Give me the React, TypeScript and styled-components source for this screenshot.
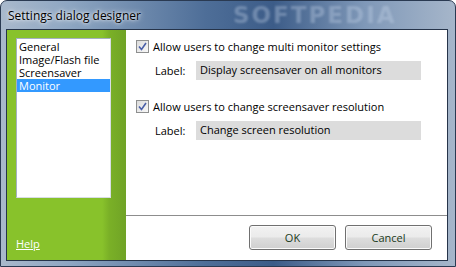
import React from "react";
import styled, { createGlobalStyle } from "styled-components";

const Global = createGlobalStyle`
  html, body { margin: 0; padding: 0; background: #ffffff; }
  body { font-family: "Open Sans", "DejaVu Sans", sans-serif; font-size: 11px; }
`;

const Frame = styled.div`
  position: relative;
  width: 456px;
  height: 267px;
  box-sizing: border-box;
  border: 1px solid #2a3a52;
  border-radius: 7px 7px 0 0;
  overflow: hidden;
  display: flex;
  flex-direction: column;
  background: linear-gradient(90deg, #a9b9cc 0%, #8ea6c2 15%, #4e6e98 45%, #3c5c88 60%, #7f98b8 80%, #a6b6ca 100%);
`;

const TitleBar = styled.div`
  position: relative;
  height: 28px;
  display: flex;
  align-items: center;
  padding-left: 7px;
`;

const Watermark = styled.div`
  position: absolute;
  left: 232px;
  top: 1px;
  line-height: 26px;
  font-family: "DejaVu Sans", sans-serif;
  font-weight: bold;
  font-size: 23px;
  letter-spacing: 2px;
  color: rgba(200, 215, 235, 0.35);
  filter: blur(1px);
`;

const Title = styled.span`
  position: relative;
  color: #000;
  font-size: 12px;
  text-shadow: 0 0 6px rgba(255, 255, 255, 0.9), 0 0 3px rgba(255, 255, 255, 0.9);
`;

const Client = styled.div`
  flex: 1;
  margin: 0 7px 5px 5px;
  border: 1px solid #26344a;
  display: flex;
  background: #fff;
`;

const Sidebar = styled.div`
  width: 119px;
  display: flex;
  flex-direction: column;
  padding: 8px 0 9px 9px;
  box-sizing: border-box;
  background: linear-gradient(90deg, #88c22b 0%, #88c22b 80%, #7ab027 86%, #70a326 100%);
`;

const ListBox = styled.div`
  width: 95px;
  height: 160px;
  box-sizing: border-box;
  background: #fff;
  border: 1px solid #a4b0bf;
  border-right-color: #d8dde4;
  border-bottom-color: #d8dde4;
  padding-top: 1px;
`;

const ListItem = styled.div<{ selected?: boolean }>`
  height: 13px;
  line-height: 13px;
  padding-left: 2px;
  white-space: nowrap;
  color: ${(p) => (p.selected ? "#fff" : "#000")};
  background: ${(p) => (p.selected ? "#3399ff" : "transparent")};
`;

const Help = styled.a`
  margin-top: auto;
  color: #fff;
  text-decoration: underline;
  font-size: 11px;
  cursor: pointer;
`;

const Main = styled.div`
  flex: 1;
  display: flex;
  flex-direction: column;
`;

const Content = styled.div`
  flex: 1;
  padding: 8px 26px 0 10px;
`;

const Group = styled.div`
  display: flex;
  flex-direction: column;
  gap: 7px;
  margin-bottom: 18px;
`;

const CheckRow = styled.label`
  display: flex;
  align-items: center;
  gap: 4px;
  height: 16px;
  color: #000;
`;

const Box = styled.span`
  width: 13px;
  height: 13px;
  box-sizing: border-box;
  border: 1px solid #8e8f8f;
  background: linear-gradient(135deg, #dcdcdc, #f8f8f8);
  display: flex;
  align-items: center;
  justify-content: center;
`;

const FieldRow = styled.div`
  display: flex;
  align-items: center;
  padding-left: 19px;
`;

const FieldLabel = styled.span`
  width: 41px;
  color: #000;
`;

const FieldValue = styled.div`
  flex: 1;
  height: 19px;
  line-height: 18px;
  background: #dcdcdc;
  padding-left: 4px;
  color: #000;
`;

const Footer = styled.div`
  height: 45px;
  border-top: 1px solid #8d8d8d;
  display: flex;
  justify-content: flex-end;
  align-items: flex-start;
  gap: 9px;
  padding: 9px 15px 0 0;
  box-sizing: border-box;
`;

const Button = styled.button`
  width: 87px;
  height: 25px;
  border: 1px solid #707070;
  border-radius: 3px;
  background: linear-gradient(180deg, #f2f2f2 0%, #ebebeb 48%, #dddddd 52%, #cfcfcf 100%);
  box-shadow: inset 0 0 0 1px #fbfbfb;
  font-family: "Open Sans", "DejaVu Sans", sans-serif;
  font-size: 11px;
  color: #1a3a1a;
  padding: 0;
`;

function Check() {
  return (
    <Box>
      <svg width="9" height="9" viewBox="0 0 9 9">
        <path d="M1 4.5 L3.5 7.5 L8 1" fill="none" stroke="#4a5fa8" strokeWidth="1.6" />
      </svg>
    </Box>
  );
}

const items = ["General", "Image/Flash file", "Screensaver", "Monitor"];

export default function App() {
  return (
    <>
      <Global />
      <Frame>
        <TitleBar>
          <Watermark>SOFTPEDIA</Watermark>
          <Title>Settings dialog designer</Title>
        </TitleBar>
        <Client>
          <Sidebar>
            <ListBox>
              {items.map((it) => (
                <ListItem key={it} selected={it === "Monitor"}>
                  {it}
                </ListItem>
              ))}
            </ListBox>
            <Help>Help</Help>
          </Sidebar>
          <Main>
            <Content>
              <Group>
                <CheckRow>
                  <Check />
                  Allow users to change multi monitor settings
                </CheckRow>
                <FieldRow>
                  <FieldLabel>Label:</FieldLabel>
                  <FieldValue>Display screensaver on all monitors</FieldValue>
                </FieldRow>
              </Group>
              <Group>
                <CheckRow>
                  <Check />
                  Allow users to change screensaver resolution
                </CheckRow>
                <FieldRow>
                  <FieldLabel>Label:</FieldLabel>
                  <FieldValue>Change screen resolution</FieldValue>
                </FieldRow>
              </Group>
            </Content>
            <Footer>
              <Button>OK</Button>
              <Button>Cancel</Button>
            </Footer>
          </Main>
        </Client>
      </Frame>
    </>
  );
}
